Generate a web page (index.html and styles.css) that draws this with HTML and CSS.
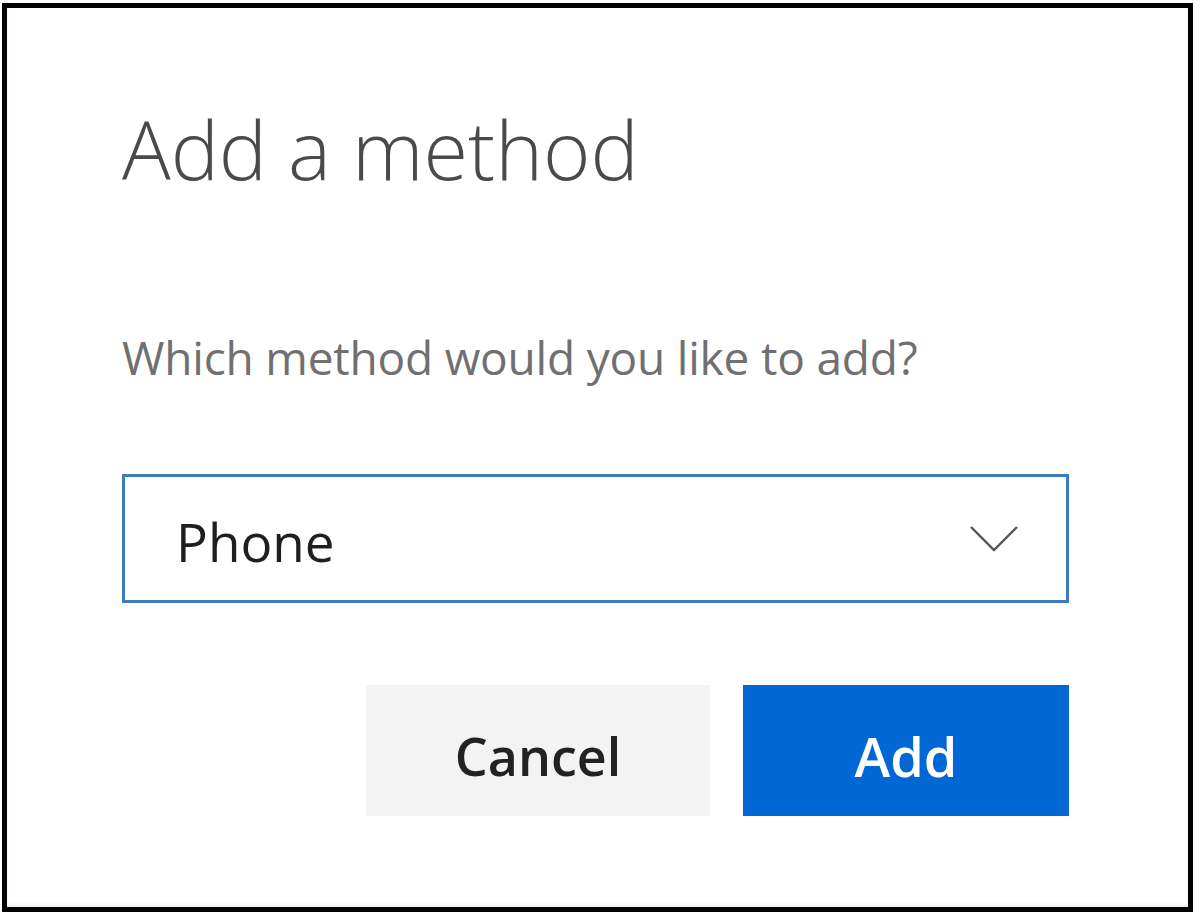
FILE: index.html
```html
<!DOCTYPE html>
<html lang="en">
<head>
<meta charset="utf-8">
<title>Add a method</title>
<link rel="stylesheet" href="styles.css">
</head>
<body>
<div class="frame">
  <div class="dialog">
    <h1 class="title">Add a method</h1>
    <p class="question">Which method would you like to add?</p>
    <div class="select">
      <span class="select-value">Phone</span>
      <svg class="chevron" width="52" height="28" viewBox="0 0 52 28" aria-hidden="true">
        <path d="M3 2 L26 25 L49 2" fill="none" stroke="#555" stroke-width="2.4"/>
      </svg>
    </div>
    <div class="actions">
      <button class="btn btn-cancel" type="button">Cancel</button>
      <button class="btn btn-add" type="button">Add</button>
    </div>
  </div>
</div>
</body>
</html>
```

FILE: styles.css
```css
html, body {
  margin: 0;
  padding: 0;
  background: #ffffff;
}

body {
  font-family: "Open Sans", "Noto Sans", "Liberation Sans", sans-serif;
}

.frame {
  margin: 3px 0 0 2px;
  width: 1191px;
  height: 909px;
  box-sizing: border-box;
  border: 5px solid #000;
  background: #fff;
  box-shadow: inset 0 -3px 3px rgba(0, 0, 0, 0.06);
}

.dialog {
  padding: 91px 119px 0 115px;
  display: flex;
  flex-direction: column;
}

.title {
  margin: 0;
  font-size: 81px;
  font-weight: 300;
  line-height: 100px;
  color: #4a4a4a;
  letter-spacing: 0;
}

.question {
  margin: 128px 0 0 0;
  font-size: 46px;
  font-weight: 400;
  line-height: 60px;
  color: #707070;
  letter-spacing: -0.2px;
}

.select {
  margin-top: 87px;
  height: 129px;
  box-sizing: border-box;
  border: 3px solid #3f7ac4;
  display: flex;
  align-items: center;
  justify-content: space-between;
  padding: 6px 46px 0 51px;
}

.select-value {
  font-size: 53px;
  color: #1f1f1f;
}

.chevron {
  display: block;
  margin-top: -6px;
}

.actions {
  margin-top: 82px;
  display: flex;
  justify-content: flex-end;
  gap: 33px;
}

.btn {
  height: 131px;
  border: none;
  font-family: "Open Sans", "Noto Sans", "Liberation Sans", sans-serif;
  padding: 10px 0 0 0;
}

.btn-cancel {
  width: 344px;
  background: #f3f3f3;
  color: #222;
  font-size: 52px;
  font-weight: 600;
}

.btn-add {
  width: 326px;
  background: #0067d5;
  color: #fff;
  font-size: 54px;
  font-weight: 600;
}
```
